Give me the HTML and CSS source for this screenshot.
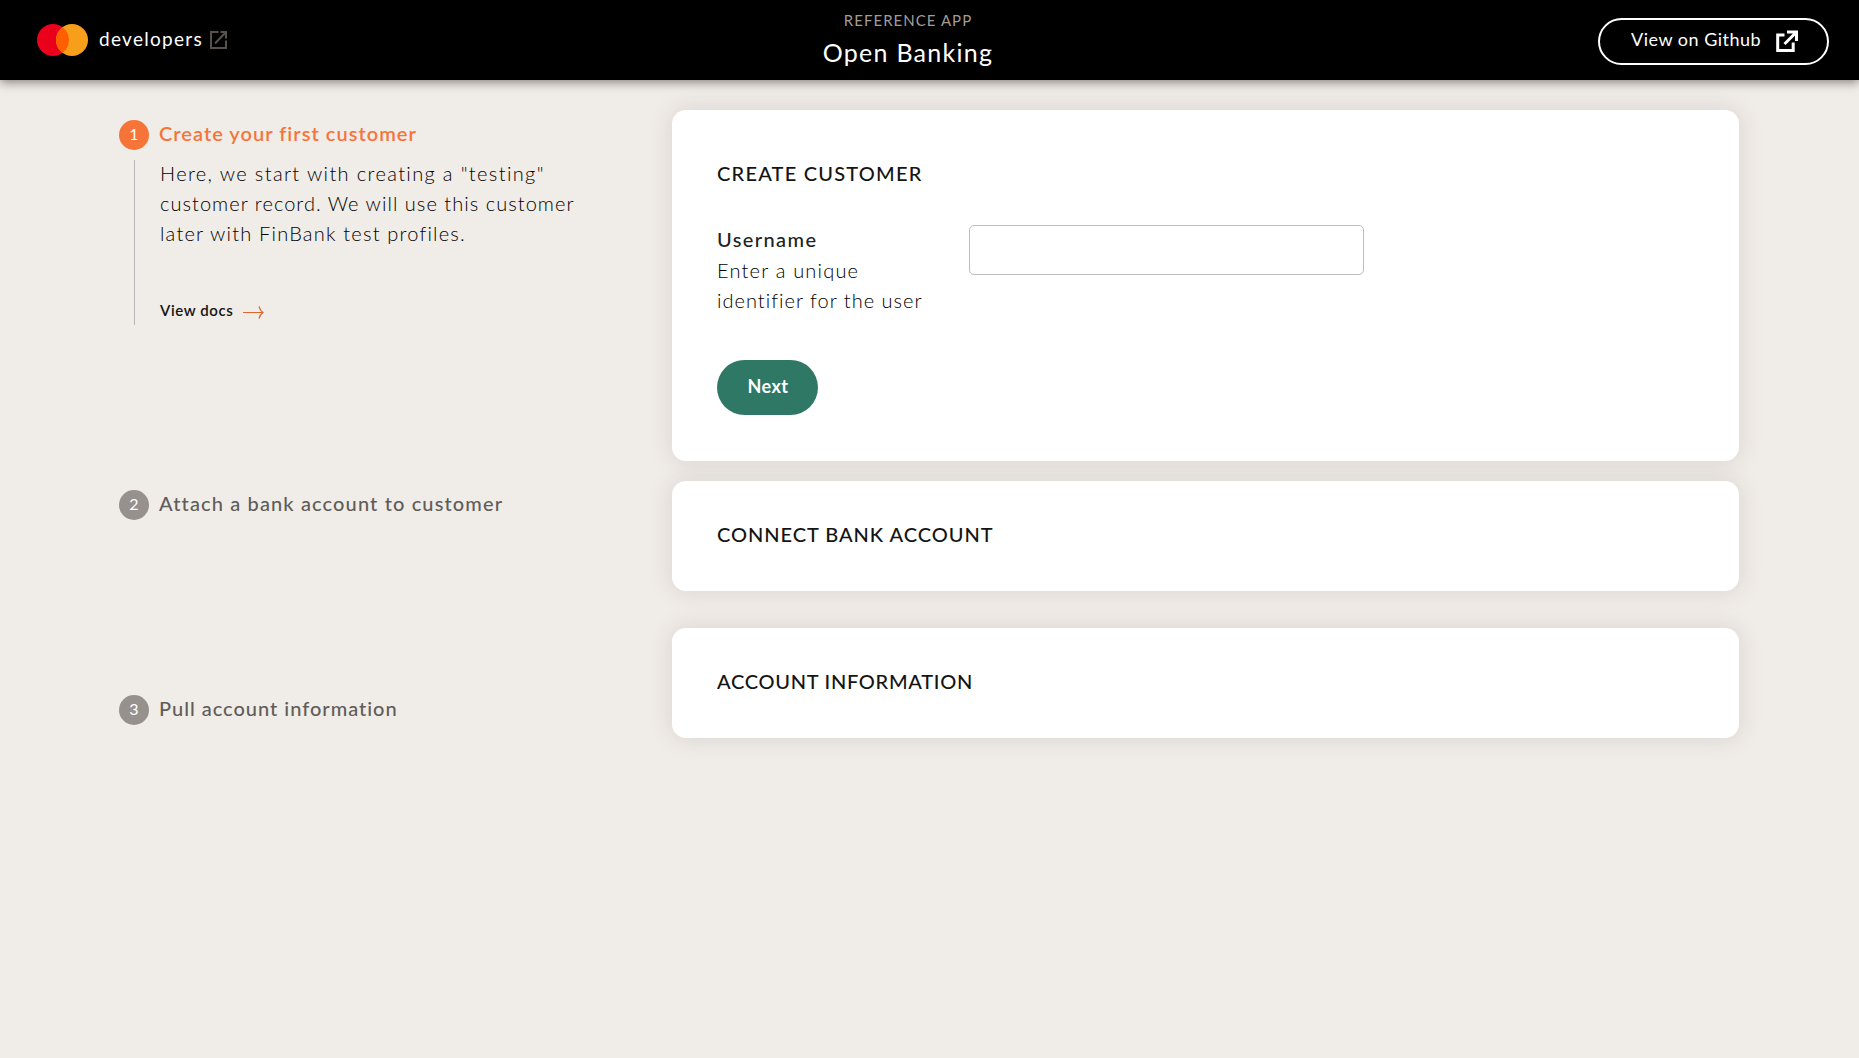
FILE: index.html
```html
<!DOCTYPE html>
<html lang="en">
<head>
<meta charset="utf-8">
<title>Open Banking</title>
<link rel="stylesheet" href="styles.css">
</head>
<body>
<header class="topbar">
  <a class="brand">
    <svg class="brand-logo" width="52" height="34" viewBox="0 0 52 34">
      <circle cx="17" cy="17" r="16" fill="#eb001b"/>
      <circle cx="36" cy="17" r="16" fill="#f79e1b"/>
      <path d="M26.500 4.130a16 16 0 0 1 0 25.740a16 16 0 0 1 0-25.740z" fill="#ff5f00"/>
    </svg>
    <span class="brand-name">developers</span>
    <svg class="brand-link" width="18" height="18" viewBox="0 0 18 18" fill="none" stroke="#56514d" stroke-width="2">
      <path d="M8.500 1H1v16h15v-7.500M10.500 1H16v6.500M15.500 1.500L5 12.500"/>
    </svg>
  </a>
  <div class="heading">
    <span class="eyebrow">REFERENCE APP</span>
    <span class="app-name">Open Banking</span>
  </div>
  <a class="github">
    <span class="github-label">View on Github</span>
    <svg width="22" height="23" viewBox="0 0 22 23" fill="none" stroke="#fff" stroke-width="3">
      <path d="M8.500 5H1.700v15.500h15.500v-8M11 2h9.500v9M20 2.500L8.500 14"/>
    </svg>
  </a>
</header>
<main class="layout">
  <ol class="steps">
    <li class="step step-active">
      <div class="step-head"><span class="step-num">1</span><span class="step-title">Create your first customer</span></div>
      <div class="step-body">
        <p class="step-text"><span class="wider">Here, we start with creating a "testing"</span><br>customer record. We will use this customer<br><span class="wide">later with FinBank test profiles.</span></p>
        <a class="docs"><span>View docs</span>
          <svg class="docs-arrow" width="21" height="14" viewBox="0 0 21 14" fill="none" stroke="#e0652f" stroke-width="1.200"><path d="M0 6.500h20M16 .5Q17 4.500 20 6.500Q17 8.500 16 12.500"/></svg>
        </a>
      </div>
    </li>
    <li class="step step-two">
      <div class="step-head"><span class="step-num">2</span><span class="step-title title-two">Attach a bank account to customer</span></div>
    </li>
    <li class="step">
      <div class="step-head"><span class="step-num">3</span><span class="step-title title-three">Pull account information</span></div>
    </li>
  </ol>
  <div class="cards">
    <section class="card card-create">
      <h2 class="card-title title-create">CREATE CUSTOMER</h2>
      <div class="field">
        <label class="field-label" for="username"><strong class="field-name">Username</strong><span class="wide">Enter a unique</span><br>identifier for the user</label>
        <input class="field-input" id="username" type="text">
      </div>
      <button class="next" type="button">Next</button>
    </section>
    <section class="card card-connect"><h2 class="card-title title-connect">CONNECT BANK ACCOUNT</h2></section>
    <section class="card"><h2 class="card-title title-info">ACCOUNT INFORMATION</h2></section>
  </div>
</main>
</body>
</html>
```
FILE: styles.css
```css
* { box-sizing: border-box; }

body {
  margin: 0;
  min-height: 1058px;
  background: #f0ece7;
  color: #141413;
  font-family: Lato, "Liberation Sans", sans-serif;
}

.topbar {
  position: relative;
  display: grid;
  grid-template-columns: 1fr auto 1fr;
  height: 80px;
  padding: 0 30px 0 36px;
  background: #000;
  color: #fff;
  box-shadow: 0 2px 10px rgba(20, 10, 5, .5);
}
.brand { display: flex; align-items: center; }
.brand-name { margin-left: 11px; padding-bottom: 2px; font-size: 19px; line-height: 24px; letter-spacing: 1.3px; }
.brand-link { margin-left: 7px; }

.heading { display: flex; flex-direction: column; align-items: center; margin-right: 49px; padding-top: 11px; }
.eyebrow { color: #a39c97; font-size: 15px; line-height: 18px; letter-spacing: 1.04px; }
.app-name { margin-top: 8px; font-size: 25px; line-height: 30px; letter-spacing: 1.25px; }

.github {
  display: flex;
  align-items: center;
  justify-self: end;
  width: 231px;
  height: 47px;
  margin-top: 18px;
  padding-left: 31px;
  border: 2px solid #fff;
  border-radius: 24px;
  font-size: 18px;
  letter-spacing: .5px;
}
.github-label { width: 145px; padding-bottom: 5px; white-space: nowrap; }

.layout { display: grid; grid-template-columns: 553px 1067px; padding: 30px 0 0 119px; }

.steps { margin: 0; padding: 10px 0 0; list-style: none; }
.step-active { height: 370px; }
.step-two { height: 205px; }
.step-head { display: flex; align-items: center; gap: 10px; height: 30px; }
.step-num {
  display: grid;
  place-items: center;
  width: 30px;
  height: 30px;
  padding-bottom: 3px;
  border-radius: 50%;
  background: #96918d;
  color: #fff;
  font-size: 16px;
}
.step-title {
  padding-bottom: 4px;
  color: #605c59;
  font-size: 20px;
  font-weight: 500;
  letter-spacing: 1.03px;
  white-space: nowrap;
}
.title-two { letter-spacing: 1.13px; }
.title-three { letter-spacing: .99px; }
.step-active .step-num { background: #f77439; }
.step-active .step-title { color: #f77439; font-weight: 600; }
.step-body {
  display: flow-root;
  height: 165px;
  margin: 10px 0 0 15px;
  padding-left: 25px;
  border-left: 1px solid #b9b8b8;
}
.step-text {
  margin: -2px 0 0;
  color: #000;
  font-size: 20px;
  font-weight: 300;
  line-height: 30px;
  letter-spacing: 1.04px;
  white-space: nowrap;
}
.wide { letter-spacing: 1.2px; }
.wider { letter-spacing: 1.36px; }
.docs {
  display: flex;
  align-items: center;
  gap: 10px;
  margin-top: 52px;
  font-size: 15px;
  font-weight: 600;
  line-height: 20px;
  letter-spacing: .6px;
}
.docs-arrow { margin-top: 5px; }

.card {
  height: 110px;
  padding: 38px 45px;
  border-radius: 14px;
  background: #fff;
  box-shadow: 0 0 25px rgba(60, 50, 40, .13);
}
.card-create { height: 351px; margin-bottom: 20px; padding-top: 48px; }
.card-connect { margin-bottom: 37px; }
.card-title { margin: 0; font-size: 20px; font-weight: 500; line-height: 30px; }
.title-create { letter-spacing: 1.22px; }
.title-connect { letter-spacing: .96px; }
.title-info { letter-spacing: .72px; }
.field { display: flex; margin-top: 37px; }
.field-label {
  width: 252px;
  color: #000;
  font-size: 20px;
  font-weight: 300;
  line-height: 30px;
  letter-spacing: 1.02px;
  white-space: nowrap;
}
.field-name { display: block; margin-top: -1px; color: #222; font-weight: 500; line-height: 31px; letter-spacing: 1.4px; }
.field-input { width: 395px; height: 50px; border: 1px solid #bdbdbd; border-radius: 5px; background: #fff; }
.next {
  display: block;
  width: 101px;
  height: 55px;
  margin-top: 45px;
  padding: 0 0 4px 1px;
  border: 0;
  border-radius: 28px;
  background: #2e7865;
  color: #fff;
  font: 700 18px Lato, "Liberation Sans", sans-serif;
  letter-spacing: .5px;
}
```
